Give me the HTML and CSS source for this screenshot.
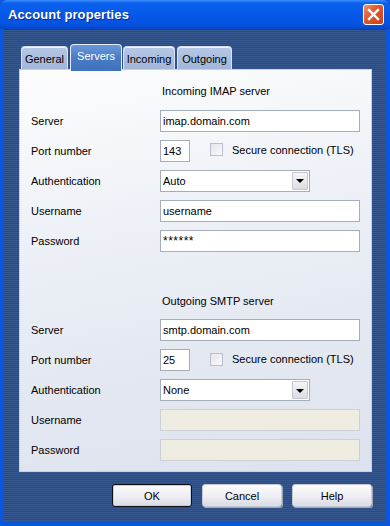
FILE: index.html
```html
<!DOCTYPE html>
<html lang="en">
<head>
    <meta charset="UTF-8">
    <meta name="viewport" content="width=device-width, initial-scale=1.0">
    <title>Account properties</title>
    <link rel="stylesheet" href="styles.css">
</head>
<body>
    <div class="window">
        <div class="titlebar">
            <span class="title">Account properties</span>
            <span class="close">
                <svg width="21" height="21" viewBox="0 0 21 21">
                    <path d="M6 6 L15 15 M15 6 L6 15" stroke="#fff" stroke-width="2.4" stroke-linecap="square"/>
                </svg>
            </span>
        </div>

        <div class="dialog">
            <div class="tabs">
                <div class="tab general">General</div>
                <div class="tab servers active">Servers</div>
                <div class="tab incoming">Incoming</div>
                <div class="tab outgoing">Outgoing</div>
            </div>

            <div class="panel">
                <div class="section-title">Incoming IMAP server</div>
                <div class="row">
                    <span class="label">Server</span>
                    <div class="field wide">imap.domain.com</div>
                </div>
                <div class="row">
                    <span class="label">Port number</span>
                    <div class="field port">143</div>
                    <span class="checkbox"></span>
                    <span class="check-label">Secure connection (TLS)</span>
                </div>
                <div class="row">
                    <span class="label">Authentication</span>
                    <div class="field select">
                        <span>Auto</span>
                        <span class="drop"><span class="arrow"></span></span>
                    </div>
                </div>
                <div class="row">
                    <span class="label">Username</span>
                    <div class="field wide">username</div>
                </div>
                <div class="row">
                    <span class="label">Password</span>
                    <div class="field wide secret">******</div>
                </div>

                <div class="section-title second">Outgoing SMTP server</div>
                <div class="row">
                    <span class="label">Server</span>
                    <div class="field wide">smtp.domain.com</div>
                </div>
                <div class="row">
                    <span class="label">Port number</span>
                    <div class="field port">25</div>
                    <span class="checkbox"></span>
                    <span class="check-label">Secure connection (TLS)</span>
                </div>
                <div class="row">
                    <span class="label">Authentication</span>
                    <div class="field select">
                        <span>None</span>
                        <span class="drop"><span class="arrow"></span></span>
                    </div>
                </div>
                <div class="row">
                    <span class="label">Username</span>
                    <div class="field wide disabled"></div>
                </div>
                <div class="row">
                    <span class="label">Password</span>
                    <div class="field wide disabled"></div>
                </div>
            </div>

            <div class="buttons">
                <button class="btn default">OK</button>
                <button class="btn">Cancel</button>
                <button class="btn">Help</button>
            </div>
        </div>
    </div>
</body>
</html>
```

FILE: styles.css
```css
* {
    margin: 0;
    padding: 0;
    box-sizing: border-box;
}

body {
    width: 390px;
    height: 526px;
    overflow: hidden;
    font-family: 'Liberation Sans', Arial, sans-serif;
    font-size: 11px;
    color: #000;
    background: #0a5ae0;
}

.window {
    width: 390px;
    height: 526px;
    display: flex;
    flex-direction: column;
    background: #0b57dc;
    border-radius: 7px 7px 0 0;
    overflow: hidden;
}

/* title bar */
.titlebar {
    height: 31px;
    display: flex;
    align-items: center;
    justify-content: space-between;
    padding: 0 6px 1px 8px;
    background: linear-gradient(#3d8dff 0, #0b62ee 3px, #0659e8 45%, #0552e0 85%, #0446c4 100%);
}

.title {
    color: #fff;
    font-weight: bold;
    font-size: 13px;
    letter-spacing: 0.1px;
    text-shadow: 1px 1px 0 #0a2a8a;
}

.close {
    width: 21px;
    height: 21px;
    display: flex;
    border: 1px solid #fff;
    border-radius: 3px;
    background: linear-gradient(135deg, #f0906a 0%, #e0552a 45%, #c8401a 100%);
}

.close svg {
    margin: -1px;
}

/* dialog body */
.dialog {
    flex: 1;
    margin: 0 4px 5px 4px;
    padding: 15px 14px 14px 15px;
    display: flex;
    flex-direction: column;
    background: repeating-linear-gradient(#2c4b82 0 1px, #37588f 1px 2px);
    box-shadow: inset 0 1px 0 #1e3c78;
}

.tabs {
    display: flex;
    align-items: flex-end;
    padding-left: 2px;
    height: 25px;
    position: relative;
    z-index: 1;
}

.tab {
    height: 23px;
    display: flex;
    align-items: center;
    justify-content: center;
    padding-top: 2px;
    background: linear-gradient(#b7c8e6, #a2b6da);
    border: 1px solid #d8e2f2;
    border-bottom: none;
    border-radius: 4px 4px 0 0;
    box-shadow: inset 0 1px 0 #eef3fb;
}

.tab.general {
    width: 47px;
}

.tab.servers {
    width: 52px;
    margin-left: 2px;
}

.tab.incoming {
    width: 52px;
    margin-left: 1px;
}

.tab.outgoing {
    width: 55px;
    margin-left: 2px;
}

.tab.active {
    height: 27px;
    margin-bottom: -2px;
    padding: 0 0 4px 0;
    color: #fff;
    background: linear-gradient(#6a98da, #4a7cc6 50%, #3f70bb);
    border: 1px solid #e8eef8;
    border-bottom: none;
    box-shadow: none;
}

.panel {
    height: 403px;
    padding: 11px 11px 10px 11px;
    display: flex;
    flex-direction: column;
    gap: 8px;
    border: 1px solid #c9d1de;
    background: linear-gradient(170deg, #fdfdfe 0%, #eef1f7 35%, #e3e8f1 70%, #dde3ee 100%);
}

.section-title {
    height: 21px;
    line-height: 20px;
    padding-left: 131px;
}

.section-title.second {
    margin-top: 31px;
}

.row {
    height: 22px;
    display: flex;
    align-items: center;
}

.label {
    width: 129px;
    flex-shrink: 0;
}

.field {
    height: 22px;
    display: flex;
    align-items: center;
    padding-left: 2px;
    background: #fff;
    border: 1px solid #a4adb9;
}

.field.wide {
    flex: 1;
}

.field.secret {
    font-size: 12px;
    letter-spacing: 0.5px;
}

.field.port {
    width: 30px;
}

.field.disabled {
    background: #eeebe0;
    border-color: #cdd1d6;
}

.field.select {
    width: 150px;
    justify-content: space-between;
    padding-right: 1px;
}

.drop {
    width: 16px;
    height: 18px;
    display: flex;
    align-items: center;
    justify-content: center;
    background: linear-gradient(#f6f6f8, #dcdce4);
    border: 1px solid #c5c8d2;
    border-radius: 1px;
}

.arrow {
    width: 0;
    height: 0;
    border-left: 4px solid transparent;
    border-right: 4px solid transparent;
    border-top: 4px solid #000;
    margin-top: 1px;
}

.checkbox {
    width: 13px;
    height: 13px;
    margin-left: 20px;
    margin-right: 9px;
    background: linear-gradient(135deg, #e2e4ea, #fbfbfc);
    border: 1px solid #b9c0cc;
    position: relative;
    top: -1px;
}

.check-label {
    position: relative;
    top: -1px;
}

/* bottom buttons */
.buttons {
    display: flex;
    justify-content: flex-end;
    gap: 10px;
    margin-top: 12px;
}

.btn {
    width: 80px;
    height: 23px;
    font-family: inherit;
    font-size: 11px;
    color: #000;
    background: linear-gradient(#fdfdfe, #ececf2 60%, #d9dae4);
    border: 1px solid #c6c9d6;
    border-radius: 3px;
    box-shadow: 1px 1px 0 #9ea6b6;
}

.btn.default {
    border: 1px solid #111;
    box-shadow: inset 0 0 0 1px #c4cde2;
}
```
